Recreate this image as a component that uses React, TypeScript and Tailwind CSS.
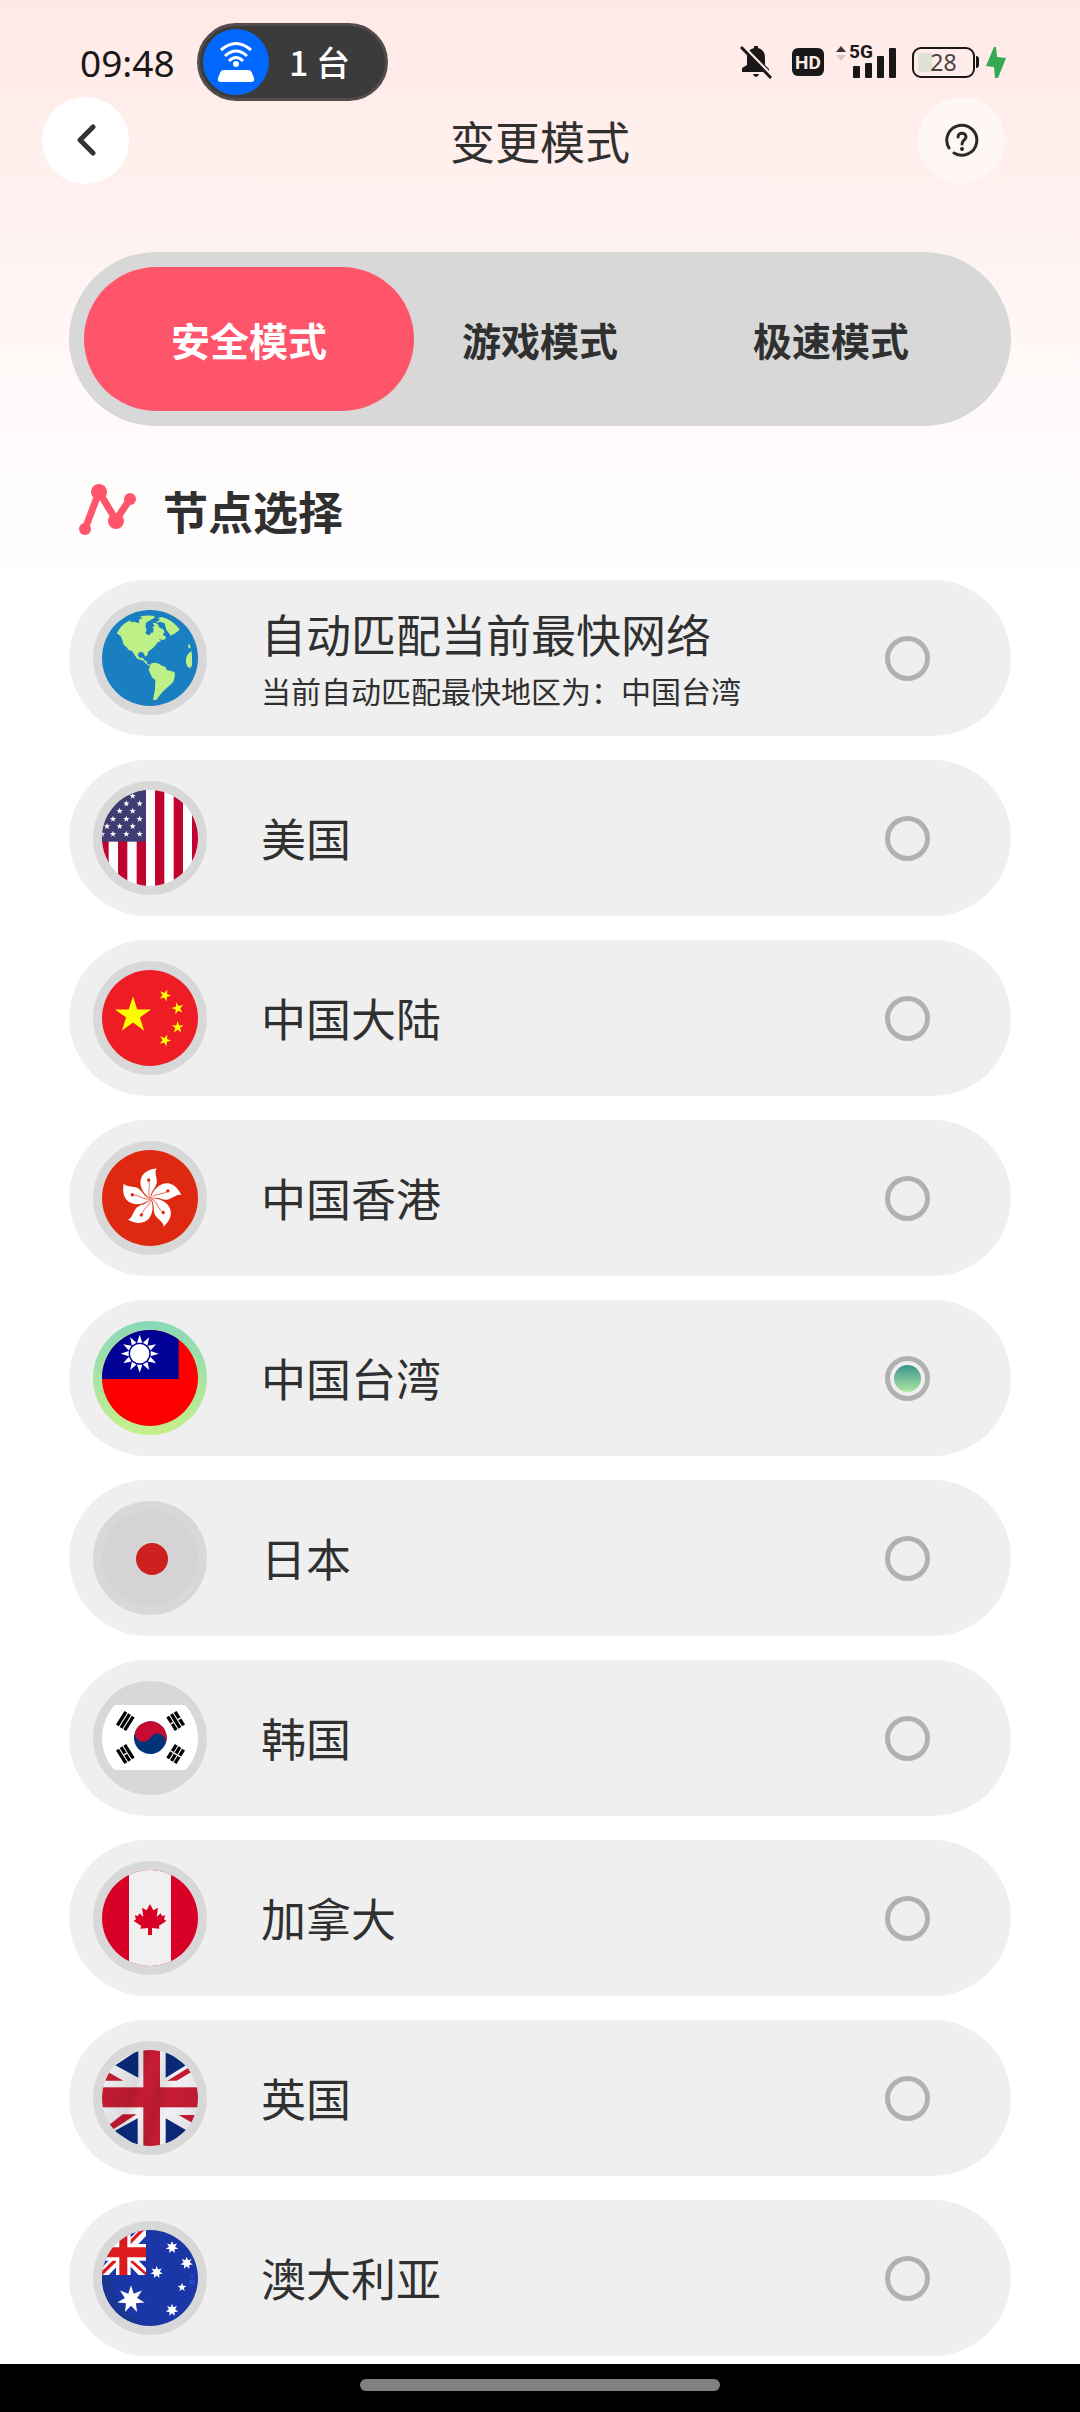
import { useState } from "react";
import type { ReactNode } from "react";
import clsx from "clsx";

const modes = ["安全模式", "游戏模式", "极速模式"];

const nodes = [
  { id: "auto", name: "自动匹配当前最快网络", icon: <GlobeIcon /> },
  { id: "us", name: "美国", icon: <UsFlag /> },
  { id: "cn", name: "中国大陆", icon: <CnFlag /> },
  { id: "hk", name: "中国香港", icon: <HkFlag /> },
  { id: "tw", name: "中国台湾", icon: <TwFlag /> },
  { id: "jp", name: "日本", icon: <JpFlag /> },
  { id: "kr", name: "韩国", icon: <KrFlag /> },
  { id: "ca", name: "加拿大", icon: <CaFlag /> },
  { id: "gb", name: "英国", icon: <GbFlag /> },
  { id: "au", name: "澳大利亚", icon: <AuFlag /> },
];

function starPoints(cx: number, cy: number, r: number, n = 5, inner = 0.4, turn = 0) {
  return Array.from({ length: n * 2 }, (_, i) => {
    const len = i % 2 === 0 ? r : r * inner;
    const a = (Math.PI * i) / n - Math.PI / 2 + (turn * Math.PI) / 180;
    return `${(cx + len * Math.cos(a)).toFixed(1)},${(cy + len * Math.sin(a)).toFixed(1)}`;
  }).join(" ");
}

/* Every flag is drawn on a 288 square and clipped to a circle */
function Flag({ children }: { children: ReactNode }) {
  return (
    <svg viewBox="0 0 288 288" className="size-24 rounded-full" aria-hidden="true">
      {children}
    </svg>
  );
}

function GlobeIcon() {
  return (
    <Flag>
      <rect width="288" height="288" fill="#1a7fc0" />
      <g fill="#bdf087">
        <path d="M44 70 L57 50 Q70 36 88 31 L84 37 L97 35 L110 40 L112 28 L122 24 L113 20 Q130 15 152 17 L160 22 L150 28 L140 33 L132 39 L130 50 L134 60 L130 68 L136 74 L143 76 L147 68 L153 68 L155 58 L151 52 L158 48 L152 40 L158 38 L167 42 L173 54 L183 57 L188 66 L182 74 L192 80 L190 88 L181 90 L171 86 L177 94 L167 97 L161 105 L154 113 L145 120 L138 126 L136 136 L130 140 L124 128 L113 125 L107 134 L112 143 L123 143 L126 150 L134 154 L136 162 L146 164 L143 168 L132 161 L124 152 L107 147 L98 136 L91 124 L80 120 L74 112 L65 104 L61 91 L56 78 Z" />
        <path d="M163 40 L174 35 L187 39 L190 48 L193 60 L200 68 L206 77 L216 72 L228 64 L233 58 Q218 38 196 27 L180 21 L168 24 L174 30 L166 34 Z" />
        <path d="M148 160 L157 158 L168 160 L181 168 L190 170 L195 181 L208 183 L219 188 L218 202 L214 215 L204 226 L193 235 L181 247 L172 257 L163 270 L153 270 L155 258 L159 240 L160 210 L151 203 L140 181 L144 168 Z" />
        <path d="M261 101 L265 108 L265 115 L260 115 L258 108 Z M268 122 L270 135 L270 166 L265 175 L257 171 L252 159 L252 145 L258 132 Z" />
      </g>
    </Flag>
  );
}

const usStars = [
  [92, 18], [73, 41], [113, 41], [53, 63], [92, 63], [33, 87], [73, 87], [113, 87],
  [15, 109], [53, 109], [92, 109], [0, 132], [33, 132], [73, 132], [113, 132],
];

function UsFlag() {
  return (
    <Flag>
      <rect width="288" height="288" fill="#fff" />
      {[-8, 48, 104, 159, 215, 270].map((x) => (
        <rect key={x} x={x} width="28" height="288" fill="#c0032f" />
      ))}
      <rect width="132" height="155" fill="#3f3c72" />
      {usStars.map(([x, y]) => (
        <polygon key={`${x}-${y}`} points={starPoints(x, y, 10)} fill="#fff" />
      ))}
    </Flag>
  );
}

function CnFlag() {
  return (
    <Flag>
      <rect width="288" height="288" fill="#ee1c25" />
      <g fill="#ffff00">
        <polygon points={starPoints(93, 136, 57, 5, 0.38)} />
        <polygon points={starPoints(189, 76, 19, 5, 0.38, 22)} />
        <polygon points={starPoints(227, 115, 19, 5, 0.38, -14)} />
        <polygon points={starPoints(227, 172, 19, 5, 0.38)} />
        <polygon points={starPoints(189, 211, 19, 5, 0.38, 22)} />
      </g>
    </Flag>
  );
}

function HkFlag() {
  return (
    <Flag>
      <rect width="288" height="288" fill="#de2910" />
      {[0, 72, 144, 216, 288].map((deg) => (
        <g key={deg} transform={`rotate(${deg} 146 146)`}>
          <path
            d="M146 146 C120 132 108 100 120 79 C130 62 148 58 164 55 C155 68 167 84 164 100 C161 116 144 124 146 146Z"
            fill="#fff"
          />
          <path d="M145 144 C134 128 147 112 140 91" fill="none" stroke="#de2910" strokeWidth="2" />
          <circle cx="140" cy="90" r="5" fill="#de2910" />
        </g>
      ))}
    </Flag>
  );
}

function TwFlag() {
  return (
    <Flag>
      <rect width="288" height="288" fill="#fe0000" />
      <rect width="230" height="147" fill="#000095" />
      {Array.from({ length: 12 }, (_, i) => (
        <polygon
          key={i}
          points="113,14 105,38 121,38"
          fill="#fff"
          transform={`rotate(${i * 30} 113 71)`}
        />
      ))}
      <circle cx="113" cy="71" r="29" fill="#fff" />
    </Flag>
  );
}

function JpFlag() {
  return (
    <Flag>
      <rect width="288" height="288" fill="#d4d4d4" />
      <circle cx="150" cy="147" r="48" fill="#cf2020" />
    </Flag>
  );
}

const trigrams = [
  { x: 70, y: 93, turn: 32, broken: [false, false, false] },
  { x: 221, y: 93, turn: -32, broken: [true, false, true] },
  { x: 70, y: 192, turn: -32, broken: [false, true, false] },
  { x: 221, y: 192, turn: 32, broken: [true, true, true] },
];

function KrFlag() {
  return (
    <Flag>
      <rect y="45" width="288" height="195" fill="#fff" />
      <g transform="rotate(30 145 143)">
        <circle cx="145" cy="143" r="49" fill="#003478" />
        <path
          d="M96 143 A49 49 0 0 1 194 143 A24.5 24.5 0 0 0 145 143 A24.5 24.5 0 0 1 96 143Z"
          fill="#c60c30"
        />
      </g>
      {trigrams.map((t) => (
        <g key={`${t.x}-${t.y}`} transform={`translate(${t.x} ${t.y}) rotate(${t.turn})`}>
          {t.broken.map((split, i) => (
            <g key={i}>
              <rect x={i * 13 - 18} y="-24" width="10" height="48" fill="#000" />
              {split && <rect x={i * 13 - 18} y="-2" width="10" height="4" fill="#fff" />}
            </g>
          ))}
        </g>
      ))}
    </Flag>
  );
}

function CaFlag() {
  return (
    <Flag>
      <rect width="288" height="288" fill="#d80027" />
      <rect x="81" width="126" height="288" fill="#f0f0f0" />
      <path
        d="M144 102 L154 121 L168 113 L164 141 L176 130 L180 138 L190 136 L186 148 L193 153 L171 167 L172 176 L150 174 L150 195 L138 195 L138 174 L116 176 L117 167 L95 153 L102 148 L98 136 L108 138 L112 130 L124 141 L120 113 L134 121 Z"
        fill="#d80027"
      />
    </Flag>
  );
}

function GbFlag() {
  return (
    <Flag>
      <defs>
        <linearGradient id="gb-fold" x1="0" y1="0.2" x2="1" y2="0.5">
          <stop offset="0" stopColor="#000" stopOpacity="0" />
          <stop offset="0.36" stopColor="#000" stopOpacity="0.1" />
          <stop offset="0.46" stopColor="#000" stopOpacity="0" />
          <stop offset="0.62" stopColor="#000" stopOpacity="0.08" />
          <stop offset="0.74" stopColor="#000" stopOpacity="0" />
          <stop offset="1" stopColor="#000" stopOpacity="0.06" />
        </linearGradient>
      </defs>
      <rect width="288" height="288" fill="#f2f2f4" />
      <g fill="#0b2a7c">
        <polygon points="40,46 109,0 109,83" />
        <polygon points="191,0 252,46 191,83" />
        <polygon points="38,243 107,205 107,290" />
        <polygon points="191,205 253,241 191,290" />
      </g>
      <g fill="#c61c33">
        <polygon points="18,66 64,92 10,92" />
        <polygon points="196,92 258,54 268,66 224,92" />
        <polygon points="22,224 62,193 104,193 34,238" />
        <polygon points="230,195 278,195 270,218" />
        <rect x="124" width="50" height="288" />
        <rect y="112" width="288" height="60" />
      </g>
      <rect width="288" height="288" fill="url(#gb-fold)" />
    </Flag>
  );
}

function AuFlag() {
  return (
    <Flag>
      <rect width="288" height="288" fill="#1b36a6" />
      <path d="M0 128 H26 Q30 230 130 288 H0Z" fill="#193690" />
      <svg width="132" height="135" viewBox="0 0 132 135">
        <path d="M-10 145 L140 -12 M-10 -12 L140 145" stroke="#fff" strokeWidth="30" />
        <path d="M-4 134 L60 72 M76 46 L134 -14" stroke="#dc1c1c" strokeWidth="10" />
        <path d="M78 84 L134 134" stroke="#dc1c1c" strokeWidth="8" />
        <path d="M42 0 H86 V42 H132 V92 H86 V135 H42 V92 H0 V42 H42Z" fill="#fff" />
        <path d="M52 0 H76 V52 H132 V82 H76 V135 H52 V82 H0 V52 H52Z" fill="#dc1c1c" />
      </svg>
      <g fill="#fff">
        <polygon points={starPoints(87, 208, 42, 7, 0.45)} />
        <polygon points={starPoints(210, 52, 19, 7, 0.5)} />
        <polygon points={starPoints(254, 99, 19, 7, 0.5)} />
        <polygon points={starPoints(164, 127, 19, 7, 0.5)} />
        <polygon points={starPoints(240, 172, 14)} />
        <polygon points={starPoints(210, 240, 19, 7, 0.5)} />
      </g>
      <g fill="#2447c4">
        <circle cx="270" cy="138" r="6" />
        <circle cx="270" cy="156" r="9" />
      </g>
    </Flag>
  );
}

function StatusBar() {
  return (
    <div className="flex h-24 items-center justify-between pt-7 pr-[74px] pl-20 text-[#1a1718]">
      <div className="flex items-center gap-[22px]">
        <span className="w-[95px] text-[37px] leading-none font-['Noto_Sans',sans-serif]">09:48</span>
        <div className="flex h-[78px] w-[191px] shrink-0 items-center gap-5 rounded-full border-[3px] border-[#524d4c] bg-[#3b3b3b] pl-[3px]">
          <div className="flex size-[66px] items-center justify-center rounded-full bg-[#0068ff]">
            <svg viewBox="0 0 38 42" className="h-[42px] w-[38px]" fill="none" stroke="#fff" strokeWidth="3">
              <path d="M4 9 Q19 -4 34 9" />
              <path d="M8 15 Q19 5 30 15" />
              <path d="M12 20 Q19 13 26 20" />
              <circle cx="19" cy="23" r="3" fill="#fff" stroke="none" />
              <path d="M7 29 H31 Q34 29 35 32 L37 37 Q38 41 34 41 H4 Q0 41 1 37 L3 32 Q4 29 7 29Z" fill="#fff" stroke="none" />
            </svg>
          </div>
          <span className="text-[34px] leading-none font-medium text-white">1 台</span>
        </div>
      </div>

      <div className="flex items-center">
        <svg viewBox="0 0 32 34" className="h-[34px] w-8">
          <path
            d="M14 1 H18 V3 Q25 5 25 13 V20 L29 24 V27 H2 V23 L7 20 V11 Q7 5 14 3Z M13 29 H19 Q18 32 16 32 Q14 32 13 29Z"
            fill="#1a1718"
          />
          <path d="M3 1 L33 32" stroke="#feebe8" strokeWidth="3" />
          <path d="M1 2 L31 33" stroke="#1a1718" strokeWidth="3" />
        </svg>
        <span className="ml-5 flex h-7 w-8 items-center justify-center rounded-md bg-[#1a1718] font-[Roboto,sans-serif] text-[19px] leading-none font-bold text-[#feebe8]">
          HD
        </span>
        <div className="relative ml-3 h-8 w-[60px]">
          <svg viewBox="0 0 60 32" className="h-8 w-[60px]" fill="#1a1718">
            <path d="M0 6 L5 0 L10 6Z" fill="#3a3536" />
            <path d="M0 9 H10 L5 15Z" fill="#d9c8c5" />
            <rect x="17" y="20" width="7" height="12" rx="1" />
            <rect x="29" y="17" width="7" height="15" rx="1" />
            <rect x="41" y="10" width="7" height="22" rx="1" />
            <rect x="53" y="2" width="7" height="30" rx="1" />
          </svg>
          <span className="absolute -top-1 left-[13px] font-[Roboto,sans-serif] text-[19px] leading-5 font-bold">
            5G
          </span>
        </div>
        <div className="relative ml-4 flex h-[31px] w-[63px] items-center justify-center rounded-[9px] border-2 border-[#1a1718] p-[3px]">
          <div className="absolute inset-y-1 left-1 w-[14px] rounded-l-sm bg-[#dfe3d5]" />
          <span className="relative font-['Noto_Sans',sans-serif] text-[23px] leading-none text-[#4a4344]">28</span>
        </div>
        <div className="ml-px h-3 w-[3px] rounded-r-sm bg-[#1a1718]" />
        <svg viewBox="0 0 20 31" className="ml-[7px] h-[31px] w-5">
          <path d="M8 0 H10 L11 10 L20 11 L12 31 H9 L8 20 L0 19Z" fill="#34a853" />
        </svg>
      </div>
    </div>
  );
}

export default function App() {
  const [mode, setMode] = useState(modes[0]);
  const [selected, setSelected] = useState("tw");

  return (
    <div className="flex min-h-screen flex-col bg-white bg-[linear-gradient(#ffe9e6_0px,#fff1ef_200px,#fffafa_410px,#ffffff_600px)] font-['Noto_Sans_CJK_SC',sans-serif] text-[#303030]">
      <StatusBar />

      {/* Title bar */}
      <header className="grid h-[88px] grid-cols-[1fr_auto_1fr] items-center">
        <button type="button" aria-label="返回" className="ml-[42px] flex size-[87px] items-center justify-center rounded-full bg-white">
          <svg viewBox="0 0 20 32" className="h-8 w-5" fill="none" stroke="#333" strokeWidth="5" strokeLinecap="round" strokeLinejoin="round">
            <path d="M17 3 L4 16 L17 29" />
          </svg>
        </button>
        <h1 className="text-[45px] leading-none">变更模式</h1>
        <button type="button" aria-label="帮助" className="mr-[75px] flex size-[87px] items-center justify-center justify-self-end rounded-full bg-[#fff7f6]">
          <svg viewBox="0 0 34 34" className="size-[34px]" fill="none" stroke="#2d2a2a" strokeWidth="3" strokeLinecap="round">
            <path d="M4 25 A15 15 0 1 1 9 30" />
            <path d="M13 14 C13 9 21 9 21 14 C21 17 17 17 17 21" />
            <circle cx="17" cy="26" r="2" fill="#2d2a2a" stroke="none" />
          </svg>
        </button>
      </header>

      <main className="flex-1 px-[69px] pb-2">
        {/* Mode switch */}
        <div className="mt-[68px] grid h-[174px] grid-cols-[55fr_42fr_55fr] rounded-full bg-[#d8d8d8] p-[15px]">
          {modes.map((item) => (
            <button
              key={item}
              type="button"
              aria-pressed={mode === item}
              onClick={() => setMode(item)}
              className={clsx(
                "rounded-full text-[39px] font-bold",
                mode === item ? "bg-[#ff556b] text-white" : "text-[#303030]"
              )}
            >
              {item}
            </button>
          ))}
        </div>

        {/* Node list */}
        <div className="mt-[54px] flex h-[60px] items-center gap-[26px] pl-2.5">
          <svg viewBox="0 0 58 52" className="h-[52px] w-[58px]" fill="#ff556b">
            <path d="M6 45 L20 8 L37 36 L51 15" fill="none" stroke="#ff556b" strokeWidth="7" />
            <circle cx="6" cy="45" r="6" />
            <circle cx="20" cy="8" r="8" />
            <circle cx="37" cy="37" r="8" />
            <circle cx="51" cy="15" r="6" />
          </svg>
          <h2 className="text-[45px] leading-none font-bold">节点选择</h2>
        </div>

        <div className="mt-10 flex flex-col gap-6">
          {nodes.map((node) => (
            <label key={node.id} className="flex h-[156px] items-center rounded-full bg-[#efefef] pr-[81px] pl-6">
              <span
                className={clsx(
                  "flex size-[114px] shrink-0 items-center justify-center rounded-full",
                  selected === node.id ? "bg-linear-to-b from-[#88d8b8] to-[#c6ef8a]" : "bg-[#d8d8d8]"
                )}
              >
                {node.icon}
              </span>
              <span className="ml-[54px] flex flex-1 flex-col">
                <span className="text-[45px] leading-[60px]">{node.name}</span>
                {node.id === "auto" && (
                  <span className="mt-0.5 -mb-0.5 text-[30px] leading-[48px]">当前自动匹配最快地区为：中国台湾</span>
                )}
              </span>
              <input
                type="radio"
                name="node"
                checked={selected === node.id}
                onChange={() => setSelected(node.id)}
                className="size-[45px] shrink-0 appearance-none rounded-full border-[5px] border-[#b1b1b1] bg-clip-content p-1 checked:bg-linear-to-b checked:from-[#23878b] checked:to-[#bdf5a0]"
              />
            </label>
          ))}
        </div>
      </main>

      {/* System gesture bar */}
      <footer className="flex h-12 justify-center bg-black pt-[15px]">
        <div className="h-3 w-1/3 rounded-full bg-[#808080]" />
      </footer>
    </div>
  );
}
